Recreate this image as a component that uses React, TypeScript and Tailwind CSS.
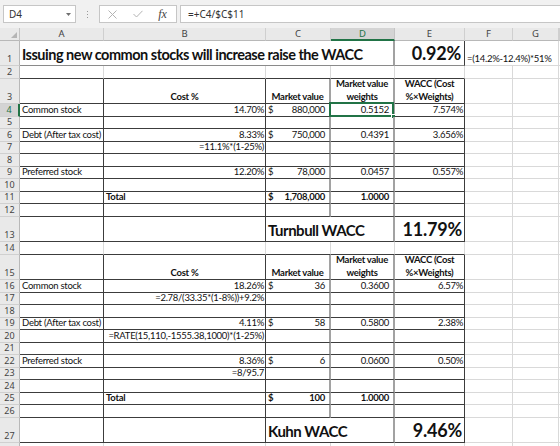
import React from 'react';

type Ln = 'n' | 'l' | 'd' | 'm' | 'g';

// Cell edge styles: none, light gridline, dark border, medium double-ish border, gray border
const RIGHT: Record<Ln, string> = {
  n: '',
  l: 'border-r border-r-[#d9d9d9]',
  d: 'border-r border-r-[#3c3c3c]',
  m: 'border-r-2 border-r-[#a2a2a2]',
  g: 'border-r border-r-[#8a8a8a]',
};
const BOTTOM: Record<Ln, string> = {
  n: '',
  l: 'border-b border-b-[#d9d9d9]',
  d: 'border-b border-b-[#3c3c3c]',
  m: 'border-b-2 border-b-[#a2a2a2]',
  g: 'border-b border-b-[#8a8a8a]',
};
const SPAN: Record<number, string> = { 1: '', 2: 'col-span-2', 4: 'col-span-4' };
const ALIGN: Record<string, string> = {
  l: 'justify-start',
  r: 'justify-end',
  c: 'justify-center text-center',
};

type C = { s?: 1 | 2 | 4; r: Ln; b: Ln; a?: 'l' | 'r' | 'c'; k?: React.ReactNode; sel?: boolean };

function Cell({ c }: { c: C }) {
  const cls = [
    'relative flex items-end min-w-0 whitespace-nowrap',
    SPAN[c.s ?? 1],
    RIGHT[c.r],
    BOTTOM[c.b],
    ALIGN[c.a ?? 'l'],
  ].join(' ');
  return (
    <div className={cls}>
      {c.k}
      {c.sel && (
        <>
          <div className="pointer-events-none absolute -left-[2px] -top-[2px] -right-[1px] -bottom-[1px] border-2 border-[#217346]" />
          <div className="absolute -right-[3px] -bottom-[3px] h-[5px] w-[5px] border border-white bg-[#217346]" />
        </>
      )}
    </div>
  );
}

const A = (t: string) => <span className="pl-[2px]">{t}</span>;
const Bv = (t: string) => <span className="pr-[1px]">{t}</span>;
const Dv = (t: string, bold = false) => (
  <span className={bold ? 'pr-[4px] font-bold' : 'pr-[4px]'}>{t}</span>
);
const Ev = (t: string) => <span className="pr-[1px]">{t}</span>;
const Acct = (t: string, bold = false) => (
  <div className={bold ? 'flex w-full justify-between pl-[2px] pr-[4px] font-bold' : 'flex w-full justify-between pl-[2px] pr-[4px]'}>
    <span>$</span>
    <span>{t}</span>
  </div>
);
const Head = (t: string) => <span className="w-full text-center font-bold">{t}</span>;
const Head2 = (a: string, b: string) => (
  <div className="w-full text-center font-bold leading-[13px]">
    {a}
    <br />
    {b}
  </div>
);
const Total = () => <span className="mr-auto pl-[2px] font-bold">Total</span>;

type V = React.ReactNode;

// A row inside one of the two bordered tables
function tr(a?: V, b?: V, c?: V, d?: V, e?: V, sel = false): C[] {
  return [
    { r: 'd', b: 'd', k: a },
    { r: 'd', b: 'd', a: 'r', k: b },
    { r: 'm', b: 'd', k: c },
    { r: 'm', b: 'd', a: 'r', k: d, sel },
    { r: 'd', b: 'd', a: 'r', k: e },
    { r: 'l', b: 'l' },
    { r: 'l', b: 'l' },
    { r: 'n', b: 'l' },
  ];
}

// A spacer row with ordinary gridlines and a table edge along its bottom
function gap(): C[] {
  return [
    { r: 'l', b: 'd' },
    { r: 'l', b: 'd' },
    { r: 'l', b: 'd' },
    { r: 'l', b: 'd' },
    { r: 'l', b: 'd' },
    { r: 'l', b: 'l' },
    { r: 'l', b: 'l' },
    { r: 'n', b: 'l' },
  ];
}

function summary(label: string, value: string): C[] {
  return [
    { r: 'd', b: 'd' },
    { r: 'd', b: 'd' },
    {
      s: 2,
      r: 'm',
      b: 'd',
      k: <span className="pl-[2px] text-[15px] font-bold leading-[21px] tracking-[-0.5px]">{label}</span>,
    },
    {
      r: 'd',
      b: 'd',
      a: 'r',
      k: <span className="pr-[2px] text-[18px] font-bold leading-[23px] tracking-[-0.2px]">{value}</span>,
    },
    { r: 'l', b: 'l' },
    { r: 'l', b: 'l' },
    { r: 'n', b: 'l' },
  ];
}

const ROWS: C[][] = [
  // 1
  [
    {
      s: 4,
      r: 'm',
      b: 'g',
      k: (
        <span className="pl-[2px] text-[14.5px] font-bold leading-[21px] tracking-[-0.5px]">
          Issuing new common stocks will increase raise the WACC
        </span>
      ),
    },
    {
      r: 'd',
      b: 'g',
      a: 'r',
      k: <span className="pr-[3px] text-[18px] font-bold leading-[23px] tracking-[-0.2px]">0.92%</span>,
    },
    { s: 2, r: 'l', b: 'l', k: <span className="pl-[2px]">=(14.2%-12.4%)*51%</span> },
    { r: 'n', b: 'l' },
  ],
  // 2
  gap(),
  // 3
  tr(undefined, Head('Cost %'), Head('Market value'), Head2('Market value', 'weights'), Head2('WACC (Cost', '%×Weights)')),
  // 4
  tr(A('Common stock'), Bv('14.70%'), Acct('880,000'), Dv('0.5152'), Ev('7.574%'), true),
  tr(),
  tr(A('Debt (After tax cost)'), Bv('8.33%'), Acct('750,000'), Dv('0.4391'), Ev('3.656%')),
  tr(undefined, Bv('=11.1%*(1-25%)')),
  tr(),
  tr(A('Preferred stock'), Bv('12.20%'), Acct('78,000'), Dv('0.0457'), Ev('0.557%')),
  tr(),
  tr(undefined, <Total />, Acct('1,708,000', true), Dv('1.0000', true)),
  tr(),
  // 13
  summary('Turnbull WACC', '11.79%'),
  // 14
  gap(),
  // 15
  tr(undefined, Head('Cost %'), Head('Market value'), Head2('Market value', 'weights'), Head2('WACC (Cost', '%×Weights)')),
  tr(A('Common stock'), Bv('18.26%'), Acct('36'), Dv('0.3600'), Ev('6.57%')),
  tr(undefined, Bv('=2.78/(33.35*(1-8%))+9.2%')),
  tr(),
  tr(A('Debt (After tax cost)'), Bv('4.11%'), Acct('58'), Dv('0.5800'), Ev('2.38%')),
  tr(undefined, Bv('=RATE(15,110,-1555.38,1000)*(1-25%)')),
  tr(),
  tr(A('Preferred stock'), Bv('8.36%'), Acct('6'), Dv('0.0600'), Ev('0.50%')),
  tr(undefined, Bv('=8/95.7')),
  tr(),
  tr(undefined, <Total />, Acct('100', true), Dv('1.0000', true)),
  tr(),
  // 27
  summary('Kuhn WACC', '9.46%'),
  // 28
  [
    { r: 'l', b: 'l' },
    { r: 'l', b: 'l' },
    { r: 'l', b: 'l' },
    { r: 'l', b: 'l' },
    { r: 'l', b: 'l' },
    { r: 'l', b: 'l' },
    { r: 'l', b: 'l' },
    { r: 'n', b: 'l' },
  ],
];

const LETTERS = ['A', 'B', 'C', 'D', 'E', 'F', 'G', ''];

function FormulaBar() {
  return (
    <div className="flex h-[28px] items-start bg-[#f1f1f1] pt-[5px] font-['Noto_Sans',sans-serif] text-[10px] text-[#333]">
      <div className="ml-[3px] flex h-[18px] w-[73px] items-center justify-between border border-[#c6c6c6] bg-white pl-[5px] pr-[4px]">
        <span>D4</span>
        <svg width="5" height="3" viewBox="0 0 5 3">
          <path d="M0 0 H5 L2.5 3 Z" fill="#6f6f6f" />
        </svg>
      </div>
      <div className="flex h-[18px] w-[23px] flex-col items-center justify-center gap-[2px]">
        <div className="h-[1px] w-[1px] bg-[#9a9a9a]" />
        <div className="h-[1px] w-[1px] bg-[#9a9a9a]" />
        <div className="h-[1px] w-[1px] bg-[#9a9a9a]" />
      </div>
      <div className="flex h-[18px] w-[78px] items-center border border-[#c6c6c6] bg-white">
        <div className="flex w-[25px] justify-center">
          <svg width="9" height="9" viewBox="0 0 9 9">
            <path d="M0.5 0.5 L8.5 8.5 M8.5 0.5 L0.5 8.5" stroke="#b3b3b3" strokeWidth="1" fill="none" />
          </svg>
        </div>
        <div className="flex w-[25px] justify-center">
          <svg width="10" height="8" viewBox="0 0 10 8">
            <path d="M0.5 4 L3.5 7 L9.5 0.8" stroke="#b3b3b3" strokeWidth="1" fill="none" />
          </svg>
        </div>
        <div className="flex w-[25px] justify-center font-['Liberation_Serif',serif] text-[12px] italic leading-none text-[#444]">
          fx
        </div>
      </div>
      <div className="ml-[3px] flex h-[18px] flex-1 items-center border border-[#c6c6c6] border-r-0 bg-white pl-[7px]">
        =+C4/$C$11
      </div>
    </div>
  );
}

export default function App() {
  return (
    <div className="h-[446px] w-[560px] overflow-hidden bg-white">
      <FormulaBar />
      <div className="grid grid-cols-[20px_84px_162px_65px_64px_70px_48px_46px_1fr] grid-rows-[13px_25px_13px_25px_13px_12px_13px_12px_13px_12px_13px_12px_13px_25px_13px_25px_13px_12px_13px_12px_13px_12px_13px_12px_13px_12px_13px_25px_13px] font-['Lato',sans-serif] text-[9.5px] leading-[12px] tracking-[-0.27px] text-[#111]">
        {/* column headers */}
        <div className="relative border-r border-b border-r-[#c4c4c4] border-b-[#b8b8b8] bg-[#e9e9e9]">
          <svg className="absolute right-[2px] bottom-[2px]" width="6" height="6" viewBox="0 0 6 6">
            <path d="M6 0 V6 H0 Z" fill="#b5b5b5" />
          </svg>
        </div>
        {LETTERS.map((l, i) =>
          l === 'D' ? (
            <div
              key={i}
              className="flex items-center justify-center border-r border-r-[#c4c4c4] border-b-2 border-b-[#217346] bg-[#d4d4d4] font-['Noto_Sans',sans-serif] text-[9.5px] tracking-normal text-[#217346]"
            >
              {l}
            </div>
          ) : (
            <div
              key={i}
              className="flex items-center justify-center border-r border-b border-r-[#cfcfcf] border-b-[#b8b8b8] bg-[#e9e9e9] font-['Noto_Sans',sans-serif] text-[9.5px] tracking-normal text-[#444]"
            >
              {l}
            </div>
          ),
        )}
        {ROWS.map((row, ri) => (
          <React.Fragment key={ri}>
            {ri === 3 ? (
              <div className="flex items-end justify-center border-r-2 border-b border-r-[#217346] border-b-[#d0d0d0] bg-[#d4d4d4] font-['Noto_Sans',sans-serif] text-[9px] leading-[12px] tracking-normal text-[#217346]">
                {ri + 1}
              </div>
            ) : (
              <div className="flex items-end justify-center border-r border-b border-r-[#b8b8b8] border-b-[#d0d0d0] bg-[#e9e9e9] font-['Noto_Sans',sans-serif] text-[9px] leading-[12px] tracking-normal text-[#444]">
                {ri < 27 ? ri + 1 : ''}
              </div>
            )}
            {row.map((c, ci) => (
              <Cell key={ci} c={c} />
            ))}
          </React.Fragment>
        ))}
      </div>
    </div>
  );
}
